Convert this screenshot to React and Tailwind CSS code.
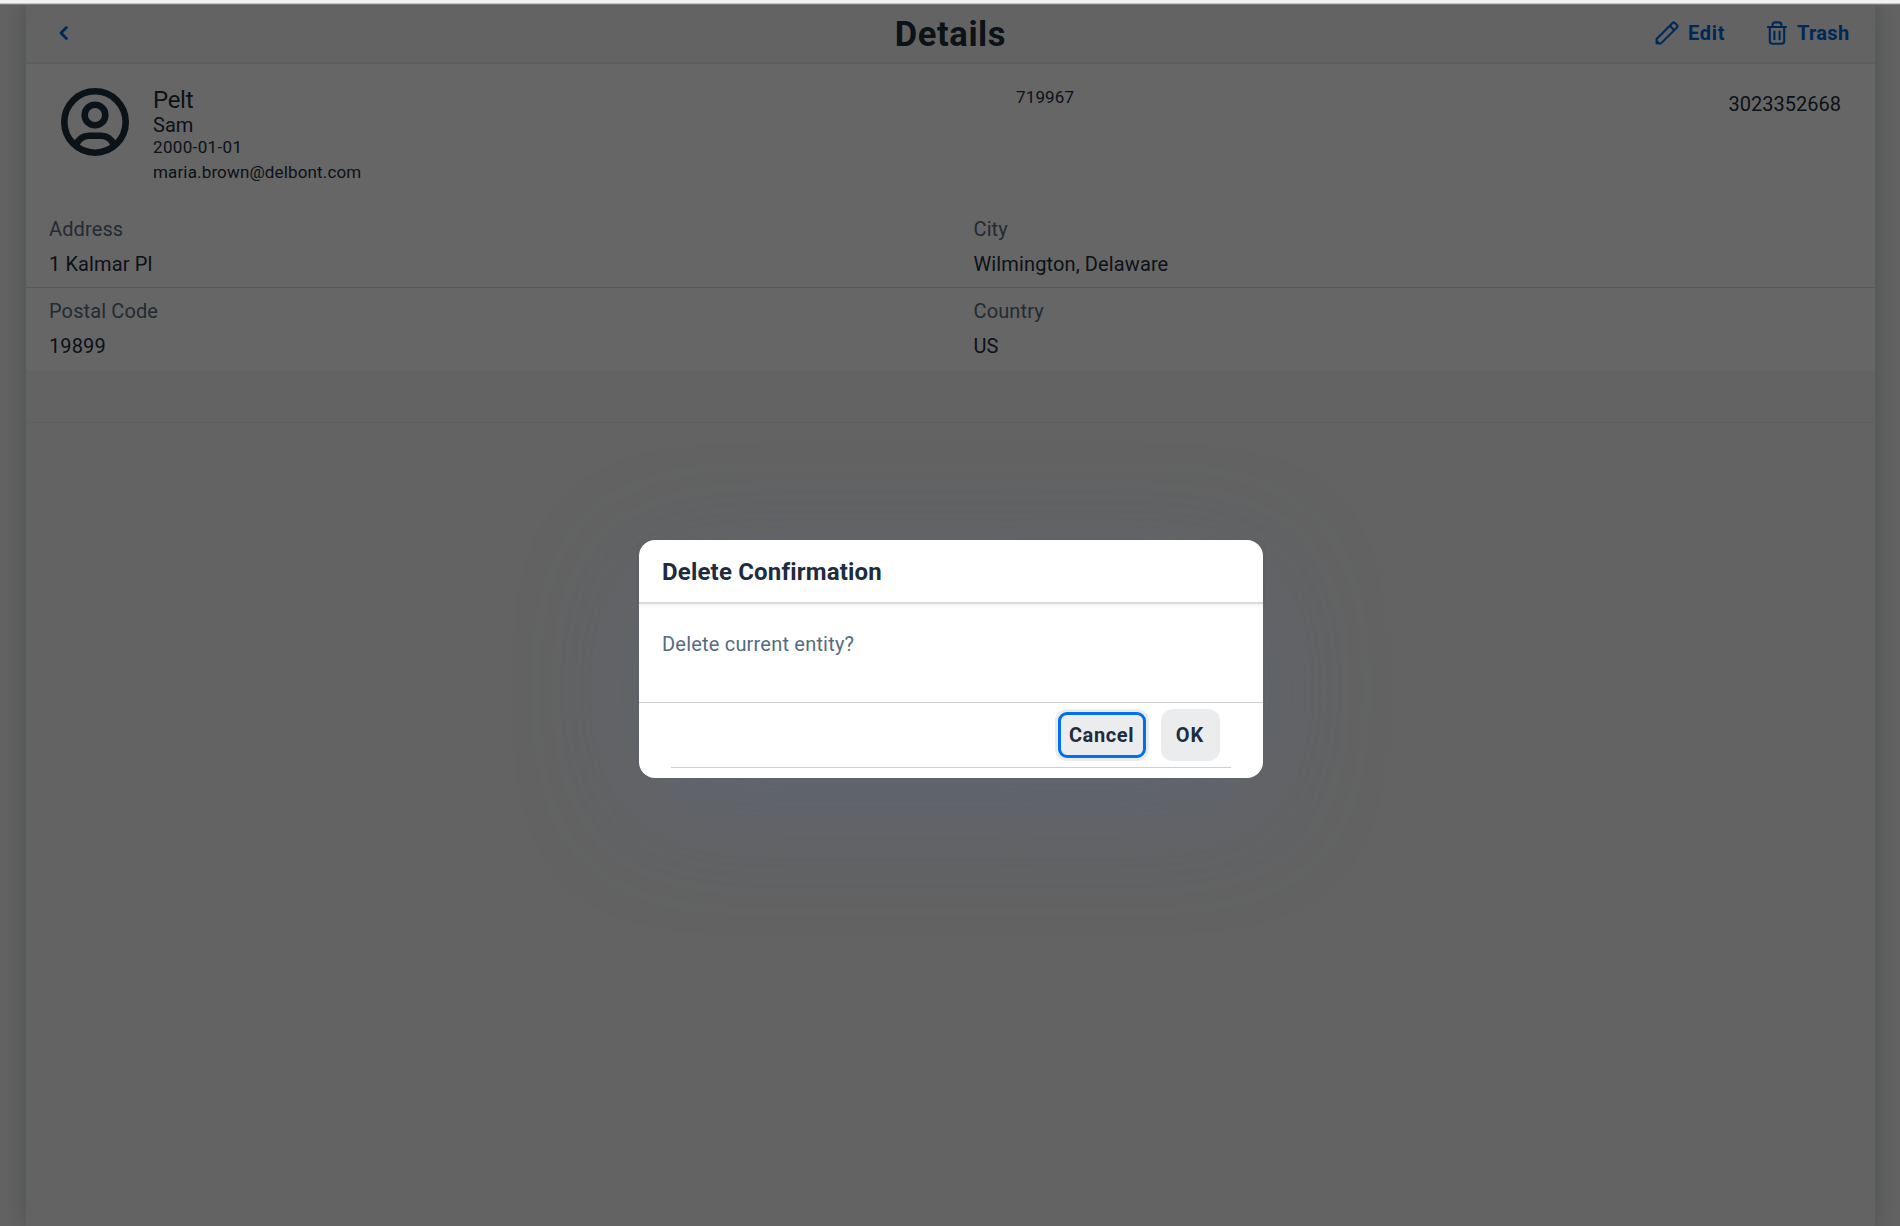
const FONT = "font-['Roboto','Noto_Sans',sans-serif]";

function Field({ label, value }) {
  return (
    <div className="flex-1 pl-[23px] pt-[7px] tracking-[0.12px]">
      <div className="h-[34px] leading-[31px] text-[#556b82]">{label}</div>
      <div className="h-[39px] leading-[33px]">{value}</div>
    </div>
  );
}

function Avatar() {
  return (
    <svg className="h-[68px] w-[68px]" viewBox="0 0 68 68" fill="none" stroke="currentColor" strokeWidth="6.6">
      <circle cx="34" cy="34" r="30.7" />
      <circle cx="34" cy="27" r="10.3" />
      <path d="M15.5 56.5C18 50.5 22 47.8 28 47.8H40C46 47.8 50 50.5 52.5 56.5" />
    </svg>
  );
}

function BackIcon() {
  return (
    <svg className="h-[14px] w-[9px]" viewBox="0 0 9 14" fill="none" stroke="currentColor" strokeWidth="2.8" strokeLinecap="round" strokeLinejoin="round">
      <path d="M7.4 1.6L2 7L7.4 12.4" />
    </svg>
  );
}

function PencilIcon() {
  return (
    <svg className="h-[24px] w-[24px]" viewBox="0 0 24 24" fill="none" stroke="currentColor" strokeWidth="2" strokeLinejoin="round">
      <path d="M1.6 18L17.8 1.8Q18.7 1 19.6 1.8L22.2 4.4Q23 5.3 22.2 6.2L6 22.4H1.6Z" />
      <path d="M14.8 4.8L19.2 9.2" />
      <path d="M1 17.8L6.2 23H1Z" fill="currentColor" stroke="none" />
    </svg>
  );
}

function TrashIcon() {
  return (
    <svg className="h-[24px] w-[20px]" viewBox="0 0 20 24" fill="none" stroke="currentColor" strokeWidth="2.1" strokeLinecap="round" strokeLinejoin="round">
      <path d="M1 6H19" />
      <path d="M5.6 5.6V4Q5.6 1.4 8.2 1.4H11.8Q14.4 1.4 14.4 4V5.6" />
      <path d="M2.8 6V20Q2.8 22.8 5.6 22.8H14.4Q17.2 22.8 17.2 20V6" />
      <path d="M7.4 10.6V18.2M12.6 10.6V18.2" />
    </svg>
  );
}

function Header() {
  return (
    <header className="grid h-[60px] grid-cols-3 items-center border-b-2 border-[#eaeaea] bg-[#f7f7f7] px-[33px] text-[#0064d9]">
      <button className="justify-self-start"><BackIcon /></button>
      <h1 className="justify-self-center pt-[2px] text-[34.5px] font-bold leading-none tracking-[0.6px] text-[#1d2d3e]">Details</h1>
      <div className="-mr-[8px] flex items-center justify-self-end text-[20px] font-bold leading-none">
        <button className="flex items-center gap-[9px]">
          <PencilIcon />
          <span className="w-[37px] text-left tracking-[0.7px]">Edit</span>
        </button>
        <button className="ml-[42px] flex items-center gap-[10px]">
          <TrashIcon />
          <span className="w-[53px] text-left tracking-[0.3px]">Trash</span>
        </button>
      </div>
    </header>
  );
}

function DeleteDialog() {
  return (
    <div className="flex h-[238px] w-[624px] flex-col rounded-[16px] bg-white text-[#1d2d3e] shadow-[0_0_2px_rgba(85,107,130,0.5),0_30px_122px_rgba(85,107,150,0.27)]">
      <div className="flex h-[64px] items-center border-b-2 border-[#d9d9d9] px-[23px] pt-[2px] text-[24px] font-bold leading-none tracking-[0.18px] shadow-[0_2px_4px_rgba(0,0,0,0.05)]">
        Delete Confirmation
      </div>
      <div className="h-[98px] px-[23px] pt-[26px] text-[20px] leading-[28px] tracking-[0.2px] text-[#556b82]">
        Delete current entity?
      </div>
      <div className="border-t border-[#d0d0d0] px-[32px]">
        <div className="flex h-[65px] items-start justify-end gap-[12px] border-b border-[#d0d0d0] pr-[11.5px] pt-[6px] text-[20px] font-bold leading-none">
          <button className="h-[52px] w-[94px] rounded-[12px] bg-[#ebecee] p-[3px]">
            <span className="flex h-full items-center justify-center rounded-[9px] border-[3px] border-[#0070f2] tracking-[0.6px]">Cancel</span>
          </button>
          <button className="h-[52px] w-[59px] rounded-[12px] bg-[#ebecee] tracking-[1px]">OK</button>
        </div>
      </div>
    </div>
  );
}

export default function App() {
  return (
    <div className={`relative h-[1226px] w-[1900px] overflow-hidden bg-[#f7f7f7] text-[20px] text-[#1d2d3e] ${FONT}`}>
      <div className="mx-[26px] flex h-full w-[1849px] flex-col bg-[#f7f7f7] pt-[4px] shadow-[0_0_24px_rgba(60,80,80,0.3)]">
        <Header />
        <section className="h-[307px] bg-white">
          <div className="flex h-[143px] pl-[35px] pr-[34px] pt-[24px]">
            <Avatar />
            <div className="ml-[24px] w-[863px]">
              <div className="h-[25px] text-[24px] leading-[25px] tracking-[-0.3px]">Pelt</div>
              <div className="h-[24px] text-[20px] leading-[25px]">Sam</div>
              <div className="h-[22px] text-[17px] leading-[20px] tracking-[0.35px]">2000-01-01</div>
              <div className="h-[26px] text-[17px] leading-[26px] tracking-[0.15px]">maria.brown@delbont.com</div>
            </div>
            <div className="text-[17px] leading-[18px] tracking-[0.15px]">719967</div>
            <div className="ml-auto text-[20px] leading-[32px]">3023352668</div>
          </div>
          <div className="flex h-[81px] border-b border-[#dedede]">
            <Field label="Address" value="1 Kalmar Pl" />
            <Field label="City" value="Wilmington, Delaware" />
          </div>
          <div className="flex h-[83px] pt-[1px]">
            <Field label="Postal Code" value="19899" />
            <Field label="Country" value="US" />
          </div>
        </section>
        <div className="h-[52px] border-b border-[#ececec]" />
      </div>
      <div className="absolute inset-0 flex flex-col bg-black/60">
        <div className="h-[5px] border-b border-[#7a7a7a] bg-[#f1f1f1]">
          <div className="mt-[3px] h-[1px] bg-[#c8c8c8]" />
        </div>
        <div className="ml-[639px] mt-[535px]">
          <DeleteDialog />
        </div>
      </div>
    </div>
  );
}
